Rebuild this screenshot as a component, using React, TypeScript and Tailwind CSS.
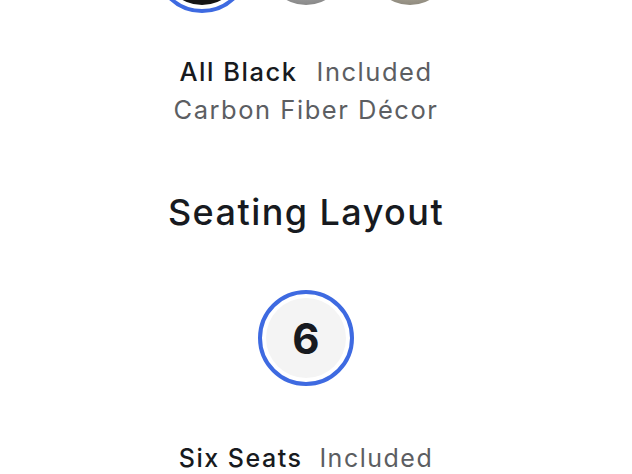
import React from 'react';

const swatches = [
    { key: 'black', label: 'All Black', fill: 'bg-[#141414]' },
    { key: 'white', label: 'Black and White', fill: 'bg-[radial-gradient(circle_at_50%_30%,#d8d8d8_0%,#a8a8a8_60%,#6e6e6e_100%)]' },
    { key: 'cream', label: 'Cream', fill: 'bg-[radial-gradient(circle_at_50%_30%,#e0dccf_0%,#b4ae9f_60%,#706c62_100%)]' },
];

export default function App() {
    const [selected, setSelected] = React.useState('black');

    return (
        <div className="w-[632px] h-[474px] overflow-hidden bg-white font-['Inter','Liberation_Sans',sans-serif] text-[#171a20]">
            <div className="w-[612px] flex flex-col items-center">
                {/* INTERIOR SWATCHES */}
                <div className="-mt-[83px] flex items-center gap-2">
                    {swatches.map((s) => {
                        const isSel = s.key === selected;
                        return (
                            <button
                                key={s.key}
                                onClick={() => setSelected(s.key)}
                                className={`w-24 h-24 rounded-full flex items-center justify-center border-4 ${isSel ? 'border-[#3e6ae1]' : 'border-transparent'}`}
                            >
                                <span className={`w-20 h-20 rounded-full ${s.fill}`} />
                            </button>
                        );
                    })}
                </div>

                <div className="mt-10 flex flex-col items-center text-[25.5px] leading-[38px] tracking-[0.06em]">
                    <div className="flex gap-[19px]">
                        <span className="font-medium">All Black</span>
                        <span className="text-[#5c5e62]">Included</span>
                    </div>
                    <span className="text-[#5c5e62]">Carbon Fiber Décor</span>
                </div>

                {/* SEATING */}
                <h2 className="mt-[63px] text-[36px] leading-[40px] font-medium tracking-[0.04em]">Seating Layout</h2>

                <div className="mt-[58px] w-24 h-24 rounded-full border-4 border-[#3e6ae1] flex items-center justify-center">
                    <span className="w-20 h-20 rounded-full bg-[#f4f4f4] flex items-center justify-center text-[42px] font-bold">6</span>
                </div>

                <div className="mt-[53px] flex gap-[17px] text-[25px] leading-[38px] tracking-[0.06em]">
                    <span className="font-medium">Six Seats</span>
                    <span className="text-[#5c5e62]">Included</span>
                </div>
            </div>
        </div>
    );
}
